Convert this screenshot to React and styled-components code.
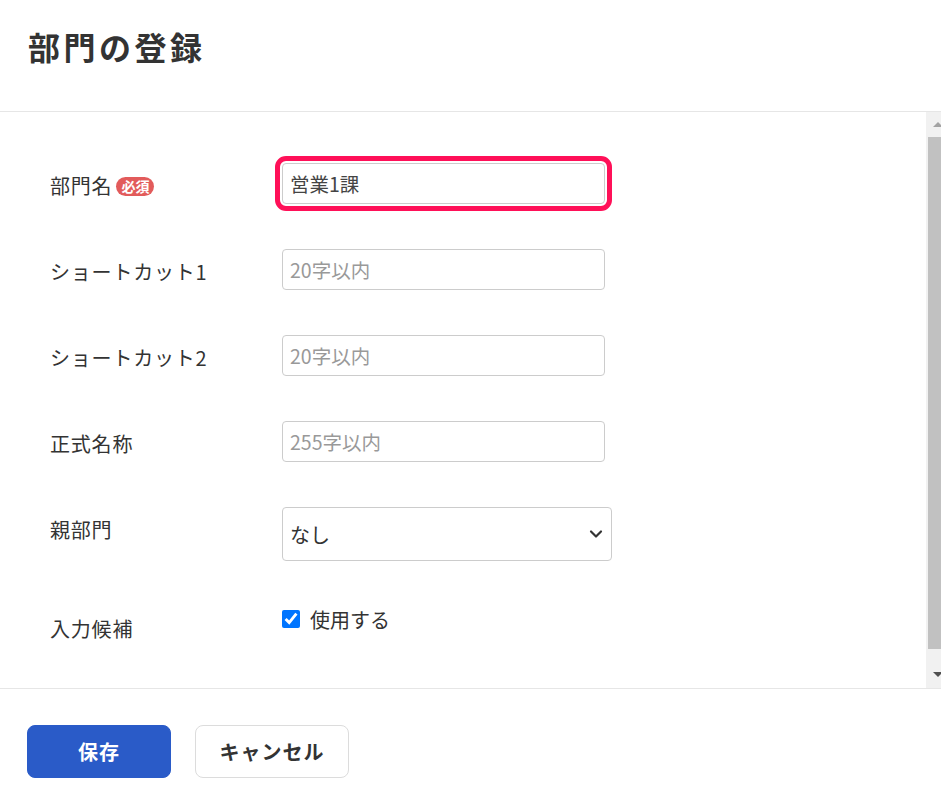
import React from 'react';
import styled, { createGlobalStyle } from 'styled-components';
import { ChevronDown } from 'lucide-react';

const GlobalStyle = createGlobalStyle`
  html, body {
    margin: 0;
    padding: 0;
    height: 100%;
  }
  body {
    font-family: "Noto Sans CJK JP", "Noto Sans", sans-serif;
    color: #333;
    background: #fff;
  }
  #root {
    height: 100%;
  }
  * {
    box-sizing: border-box;
  }
`;

const Page = styled.div`
  height: 100vh;
  display: flex;
  flex-direction: column;
`;

const Header = styled.header`
  height: 112px;
  flex-shrink: 0;
  padding: 22px 28px 0;
  border-bottom: 1px solid #e6e6e6;
`;

const Title = styled.h1`
  margin: 0;
  font-size: 32px;
  line-height: 48px;
  font-weight: 700;
  letter-spacing: 3.5px;
  color: #333;
`;

const Body = styled.div`
  flex: 1;
  min-height: 0;
  display: flex;
`;

const Content = styled.div`
  flex: 1;
  overflow: hidden;
`;

// classic scrollbar look (the real one is hidden in screenshots)
const ScrollTrack = styled.div`
  width: 15px;
  flex-shrink: 0;
  background: #f1f1f1;
  display: flex;
  flex-direction: column;
`;

const ScrollArrow = styled.svg`
  display: block;
  width: 15px;
  height: 25px;
  flex-shrink: 0;
  fill: ${(p) => (p.$disabled ? '#a3a3a3' : '#505050')};
`;

const ScrollThumb = styled.div`
  height: 512px;
  margin-left: 2px;
  background: #c1c1c1;
`;

const ScrollSpacer = styled.div`
  flex: 1;
`;

const Form = styled.div`
  display: flex;
  flex-direction: column;
  gap: 45px;
  padding: 51px 0 70px 50px;
`;

const Row = styled.div`
  display: flex;
  align-items: flex-start;
`;

const Label = styled.div`
  width: 232px;
  flex-shrink: 0;
  padding-top: 9px;
  font-size: 20px;
  line-height: 28px;
  letter-spacing: 0.8px;
  color: #333;
  display: flex;
  align-items: center;
`;

const Required = styled.span`
  display: inline-block;
  margin-left: 4px;
  padding: 0 5px;
  height: 19px;
  line-height: 19px;
  border-radius: 10px;
  background: #e25b5b;
  color: #fff;
  font-size: 14px;
  font-weight: 700;
  letter-spacing: 0;
`;

const TextInput = styled.input`
  width: 323px;
  height: 41px;
  padding: 0 7px;
  border: 1px solid #cccccc;
  border-radius: 4px;
  font-family: inherit;
  font-size: 19.5px;
  color: #444;
  background: #fff;
  outline: ${(p) => (p.$highlight ? '5px solid #ff1058' : 'none')};
  outline-offset: 2px;

  &::placeholder {
    color: #999;
  }
`;

const SelectWrap = styled.div`
  position: relative;
  width: 330px;
  height: 54px;
`;

const Select = styled.select`
  appearance: none;
  width: 100%;
  height: 100%;
  padding: 0 36px 0 7px;
  border: 1px solid #cccccc;
  border-radius: 4px;
  background: #fff;
  font-family: inherit;
  font-size: 20px;
  color: #333;
  outline: none;
`;

const SelectArrow = styled.span`
  position: absolute;
  right: 6px;
  top: 50%;
  transform: translateY(-50%);
  display: flex;
  color: #333;
  pointer-events: none;
`;

const CheckLabel = styled.label`
  display: flex;
  align-items: center;
  gap: 10px;
  height: 26px;
  font-size: 20px;
  color: #333;
`;

const Checkbox = styled.input`
  width: 18px;
  height: 18px;
  margin: 0;
  accent-color: #0075ff;
`;

const Footer = styled.footer`
  flex-shrink: 0;
  height: 116px;
  border-top: 1px solid #e6e6e6;
  padding: 36px 27px 0;
  display: flex;
  align-items: flex-start;
  gap: 24px;
`;

const Button = styled.button`
  height: 53px;
  width: ${(p) => p.$width}px;
  border-radius: 8px;
  font-family: inherit;
  font-size: 20px;
  font-weight: 700;
  letter-spacing: 1px;
  cursor: pointer;
  border: 1px solid ${(p) => (p.$primary ? '#2a5bc8' : '#dcdcdc')};
  background: ${(p) => (p.$primary ? '#2a5bc8' : '#fff')};
  color: ${(p) => (p.$primary ? '#fff' : '#333')};
`;

const fields = [
  { label: 'ショートカット1', placeholder: '20字以内' },
  { label: 'ショートカット2', placeholder: '20字以内' },
  { label: '正式名称', placeholder: '255字以内' },
];

export default function App() {
  return (
    <>
      <GlobalStyle />
      <Page>
        <Header>
          <Title>部門の登録</Title>
        </Header>
        <Body>
          <Content>
            <Form>
              <Row>
                <Label>
                  部門名<Required>必須</Required>
                </Label>
                <TextInput $highlight defaultValue="営業1課" />
              </Row>
              {fields.map((f) => (
                <Row key={f.label}>
                  <Label>{f.label}</Label>
                  <TextInput placeholder={f.placeholder} />
                </Row>
              ))}
              <Row>
                <Label>親部門</Label>
                <SelectWrap>
                  <Select defaultValue="none">
                    <option value="none">なし</option>
                  </Select>
                  <SelectArrow>
                    <ChevronDown size={20} strokeWidth={2.6} />
                  </SelectArrow>
                </SelectWrap>
              </Row>
              <Row>
                <Label>入力候補</Label>
                <CheckLabel>
                  <Checkbox type="checkbox" defaultChecked />
                  使用する
                </CheckLabel>
              </Row>
            </Form>
          </Content>
          <ScrollTrack>
            <ScrollArrow $disabled viewBox="0 0 15 25">
              <polygon points="7,15 12,10 17,15" />
            </ScrollArrow>
            <ScrollThumb />
            <ScrollSpacer />
            <ScrollArrow viewBox="0 0 15 25">
              <polygon points="7,9 17,9 12,14" />
            </ScrollArrow>
          </ScrollTrack>
        </Body>
        <Footer>
          <Button $primary $width={144}>保存</Button>
          <Button $width={154}>キャンセル</Button>
        </Footer>
      </Page>
    </>
  );
}
